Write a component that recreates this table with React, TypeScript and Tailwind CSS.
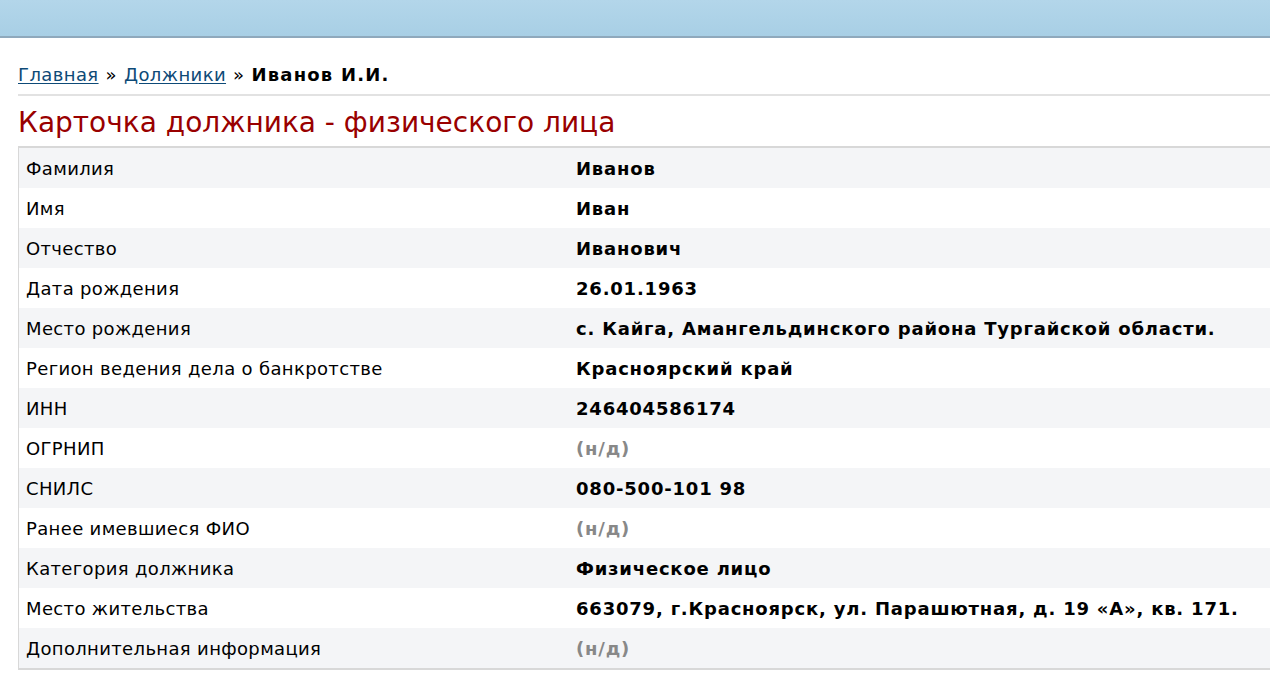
import React from 'react';

type Row = { label: string; value: string | null };

const rows: Row[] = [
  { label: 'Фамилия', value: 'Иванов' },
  { label: 'Имя', value: 'Иван' },
  { label: 'Отчество', value: 'Иванович' },
  { label: 'Дата рождения', value: '26.01.1963' },
  { label: 'Место рождения', value: 'с. Кайга, Амангельдинского района Тургайской области.' },
  { label: 'Регион ведения дела о банкротстве', value: 'Красноярский край' },
  { label: 'ИНН', value: '246404586174' },
  { label: 'ОГРНИП', value: null },
  { label: 'СНИЛС', value: '080-500-101 98' },
  { label: 'Ранее имевшиеся ФИО', value: null },
  { label: 'Категория должника', value: 'Физическое лицо' },
  { label: 'Место жительства', value: '663079, г.Красноярск, ул. Парашютная, д. 19 «А», кв. 171.' },
  { label: 'Дополнительная информация', value: null },
];

export default function App() {
  return (
    <div className="min-h-[690px] bg-white font-['DejaVu_Sans','Verdana',sans-serif] text-black">
      {/* Top bar */}
      <div className="h-[38px] border-b-2 border-[#8fa9bc] bg-gradient-to-b from-[#b3d6ea] to-[#a8cfe5]" />

      <div className="pl-[18px]">
        {/* Breadcrumbs */}
        <div className="flex items-center h-[58px] pt-[16px] border-b-2 border-[#e2e2e2] text-[18px] tracking-[0.4px]">
          <a href="#" className="text-[#0e4a77] underline underline-offset-2">Главная</a>
          <span className="mx-[7px]">»</span>
          <a href="#" className="text-[#0e4a77] underline underline-offset-2">Должники</a>
          <span className="mx-[7px]">»</span>
          <span className="font-bold tracking-[1.2px]">Иванов И.И.</span>
        </div>

        <h1 className="h-[50px] pt-[4px] flex items-center text-[28px] text-[#990000] leading-none">
          Карточка должника - физического лица
        </h1>

        {/* Details table */}
        <div className="border-t-2 border-b-2 border-l border-[#d8d8d8] text-[18px]">
          {rows.map((row, i) => (
            <div
              key={row.label}
              className={`flex items-center h-[40px] ${i % 2 === 0 ? 'bg-[#f4f5f7]' : 'bg-white'}`}
            >
              <div className="w-[557px] pl-[7px] shrink-0 tracking-[0.35px]">{row.label}</div>
              <div className={`font-bold tracking-[0.8px] ${row.value ? '' : 'text-[#888888]'}`}>
                {row.value ?? '(н/д)'}
              </div>
            </div>
          ))}
        </div>
      </div>
    </div>
  );
}
